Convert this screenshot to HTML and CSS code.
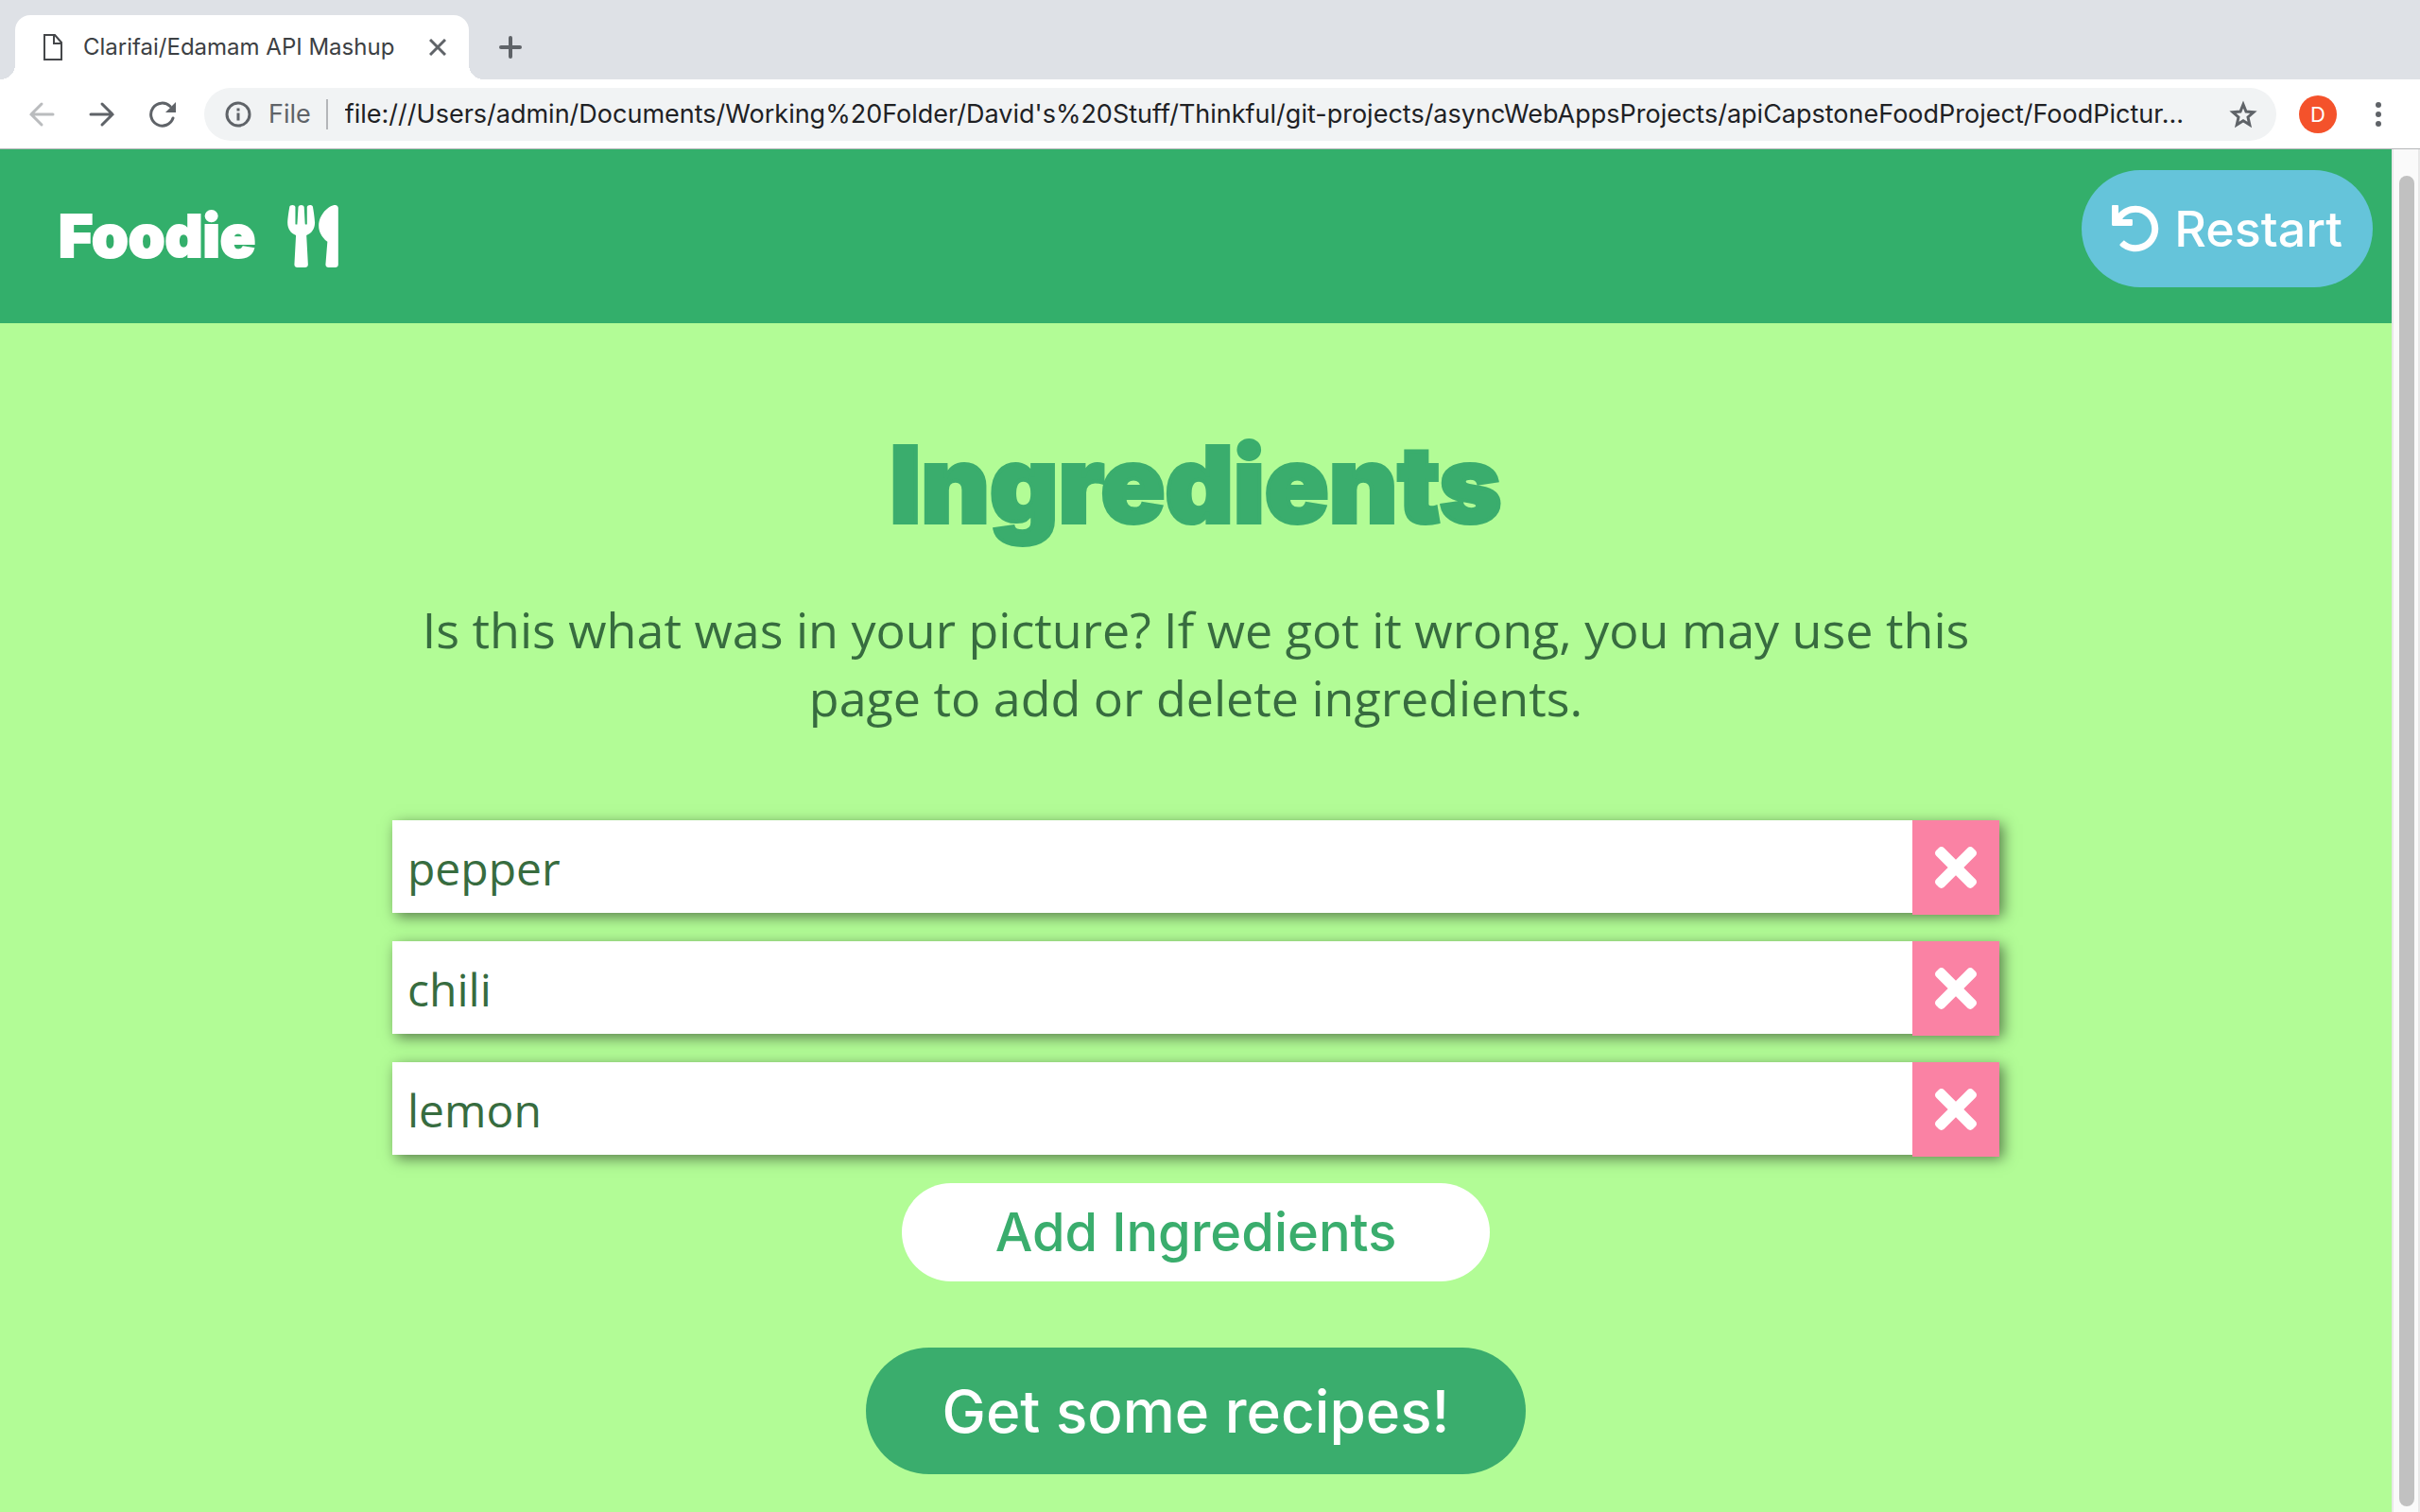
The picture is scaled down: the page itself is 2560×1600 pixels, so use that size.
FILE: index.html
```
<!DOCTYPE html>
<html lang="en">
<head>
<meta charset="utf-8">
<title>Clarifai/Edamam API Mashup</title>
<link rel="stylesheet" href="styles.css">
</head>
<body>
<div class="tab-strip">
  <div class="tab">
    <svg class="tab-file" width="20" height="28" viewBox="0 0 20 28" fill="none" stroke="#45474a" stroke-width="2"><path d="M1 1h11l7 8v18H1zM11 1v9h8"/></svg>
    <span class="tab-title">Clarifai/Edamam API Mashup</span>
    <button class="icon-button" aria-label="Close tab"><svg width="18" height="18" viewBox="0 0 18 18" stroke="#5f6368" stroke-width="3"><path d="M1 1l16 16M17 1L1 17"/></svg></button>
  </div>
  <button class="icon-button new-tab" aria-label="New tab"><svg width="24" height="24" viewBox="0 0 24 24" stroke="#5f6368" stroke-width="4" stroke-linecap="round"><path d="M12 2v20M2 12h20"/></svg></button>
</div>
<div class="toolbar">
  <div class="nav-buttons">
    <button class="icon-button" aria-label="Back"><svg width="28" height="28" viewBox="0 0 28 28" fill="none" stroke="#babcbe" stroke-width="3" stroke-linecap="round"><path d="M26 14H3M14 3L3 14l11 11"/></svg></button>
    <button class="icon-button" aria-label="Forward"><svg width="28" height="28" viewBox="0 0 28 28" fill="none" stroke="#5f6368" stroke-width="3" stroke-linecap="round"><path d="M2 14h23M14 3l11 11-11 11"/></svg></button>
    <button class="icon-button" aria-label="Reload"><svg width="28" height="28" viewBox="0 0 28 28" fill="none"><path d="M25 18A12 12 0 1 1 22 5.500" stroke="#5f6368" stroke-width="3" stroke-linecap="round"/><path d="M28 1v11h-11z" fill="#5f6368"/></svg></button>
  </div>
  <div class="omnibox">
    <svg width="28" height="28" viewBox="0 0 28 28" fill="none" stroke="#5f6368" stroke-width="3"><circle cx="14" cy="14" r="12"/><path d="M14 12.500v8M14 7.500v3"/></svg>
    <label class="scheme" for="url">File</label>
    <span class="separator"></span>
    <input class="url" id="url" type="text" value="file:///Users/admin/Documents/Working%20Folder/David's%20Stuff/Thinkful/git-projects/asyncWebAppsProjects/apiCapstoneFoodProject/FoodPictur...">
    <button class="icon-button" aria-label="Bookmark"><svg width="30" height="30" viewBox="0 0 30 30" fill="none" stroke="#5f6368" stroke-width="3"><path d="M15 4.500l3 7.500 8 .700-6 5.300 1.800 8L15 21.700 8.200 26l1.800-8-6-5.300 8-.700z"/></svg></button>
  </div>
  <button class="avatar">D</button>
  <button class="icon-button menu" aria-label="Menu"><svg width="8" height="28" viewBox="0 0 8 28" fill="#5f6368"><circle cx="4" cy="4" r="3"/><circle cx="4" cy="14" r="3"/><circle cx="4" cy="24" r="3"/></svg></button>
</div>
<div class="viewport">
  <div class="page">
    <header class="site-header">
      <div class="brand">
        <span>Foodie</span>
        <svg width="54" height="66" viewBox="0 0 416 512" fill="#fff"><path d="M207.9 15.2c.8 4.7 16.1 94.5 16.1 128.8 0 52.3-27.8 89.6-68.9 104.600L168 486.700c.7 13.700-10.200 25.300-24 25.300H80c-13.700 0-24.700-11.500-24-25.300l12.900-238.100C27.700 233.600 0 196.200 0 144 0 109.600 15.300 19.900 16.100 15.200 19.300-5.100 61.400-5.400 64 16.300v141.200c1.300 3.400 15.100 3.200 16 0 1.400-25.300 7.900-139.200 8-141.800 3.300-20.800 44.700-20.800 47.900 0 .2 2.700 6.600 116.500 8 141.800.9 3.200 14.800 3.400 16 0V16.300c2.600-21.600 44.800-21.400 48-1.100zm119.200 285.700l-15 185.100c-1.200 14 9.900 26 23.900 26h56c13.300 0 24-10.700 24-24V24c0-13.200-10.700-24-24-24-82.500 0-221.400 178.500-64.900 300.900z"/></svg>
      </div>
      <button class="restart">
        <svg width="50" height="50" viewBox="0 0 512 512" fill="#fff"><path d="M212.333 224.333H12c-6.627 0-12-5.373-12-12V12C0 5.373 5.373 0 12 0h48c6.627 0 12 5.373 12 12v78.112C117.773 39.279 184.260 7.470 258.175 8.007c136.906.994 246.448 111.623 246.157 248.532C504.041 393.258 393.120 504 256.333 504c-64.089 0-122.496-24.313-166.510-64.215-5.099-4.622-5.334-12.554-.467-17.420l33.967-33.967c4.474-4.474 11.662-4.717 16.401-.525C170.760 415.336 211.580 432 256.333 432c97.268 0 176-78.716 176-176 0-97.267-78.716-176-176-176-58.496 0-110.280 28.476-142.274 72.333h98.274c6.627 0 12 5.373 12 12v48c0 6.627-5.373 12-12 12z"/></svg>
        <span>Restart</span>
      </button>
    </header>
    <main class="content">
      <h1 class="title">Ingredients</h1>
      <p class="intro">Is this what was in your picture? If we got it wrong, you may use this page to add or delete ingredients.</p>
      <ul class="ingredients">
        <li class="ingredient"><span class="name">pepper</span><button class="remove" aria-label="Delete pepper"><svg width="44" height="44" viewBox="0 80 352 352"><use href="#times"/></svg></button></li>
        <li class="ingredient"><span class="name">chili</span><button class="remove" aria-label="Delete chili"><svg width="44" height="44" viewBox="0 80 352 352"><use href="#times"/></svg></button></li>
        <li class="ingredient"><span class="name">lemon</span><button class="remove" aria-label="Delete lemon"><svg width="44" height="44" viewBox="0 80 352 352"><use href="#times"/></svg></button></li>
      </ul>
      <button class="add">Add Ingredients</button>
      <button class="recipes">Get some recipes!</button>
    </main>
  </div>
  <div class="scrollbar"><div class="thumb"></div></div>
</div>
<svg class="symbols" width="0" height="0"><defs><path id="times" fill="#fff" d="M242.720 256l100.070-100.070c12.280-12.280 12.280-32.190 0-44.480l-22.240-22.240c-12.280-12.280-32.190-12.280-44.480 0L176 189.280 75.930 89.210c-12.280-12.280-32.190-12.280-44.480 0L9.210 111.450c-12.280 12.280-12.280 32.190 0 44.480L109.280 256 9.210 356.070c-12.280 12.280-12.280 32.190 0 44.480l22.240 22.240c12.280 12.280 32.200 12.280 44.480 0L176 322.720l100.070 100.070c12.280 12.280 32.200 12.280 44.480 0l22.240-22.240c12.280-12.280 12.280-32.190 0-44.480L242.720 256z"/></defs></svg>
</body>
</html>
```
FILE: styles.css
```
* { box-sizing: border-box; }
body {
  margin: 0;
  min-height: 100vh;
  display: flex;
  flex-direction: column;
  font-family: Inter, "Liberation Sans", sans-serif;
}
button { border: 0; padding: 0; font-family: inherit; cursor: pointer; }
svg { display: block; flex: none; }
.symbols { position: absolute; }
.icon-button { background: none; flex: none; }

/* Browser chrome */
.tab-strip {
  height: 84px;
  padding: 16px 16px 0;
  display: flex;
  background: #dee1e6;
}
.tab {
  position: relative;
  width: 480px;
  padding: 0 24px 0 30px;
  display: flex;
  align-items: center;
  background: #fff;
  border-radius: 16px 16px 0 0;
}
.tab::before,
.tab::after {
  content: "";
  position: absolute;
  bottom: 0;
  width: 16px;
  height: 16px;
}
.tab::before { right: 100%; background: radial-gradient(circle at 0 0, #dee1e6 16px, #fff 16px); }
.tab::after { left: 100%; background: radial-gradient(circle at 100% 0, #dee1e6 16px, #fff 16px); }
.tab-title {
  flex: 1;
  margin-left: 22px;
  font-size: 24px;
  line-height: 28px;
  color: #3c4043;
  white-space: nowrap;
}
.new-tab { margin-left: 32px; }
.toolbar {
  height: 74px;
  padding: 8px 40px 8px 30px;
  display: flex;
  align-items: center;
  background: #fff;
  border-bottom: 1px solid #b4b6b8;
}
.nav-buttons { display: flex; gap: 36px; }
.omnibox {
  flex: 1;
  height: 56px;
  margin-left: 30px;
  padding: 0 20px 0 22px;
  display: flex;
  align-items: center;
  background: #f1f3f4;
  border-radius: 28px;
  font-size: 27px;
}
.scheme { margin-left: 18px; color: #5f6368; }
.separator { width: 2px; height: 32px; margin: 0 18px 0 16px; background: #b4b6b9; }
.url {
  flex: 1;
  min-width: 0;
  padding: 0;
  border: 0;
  background: none;
  font: inherit;
  color: #202124;
}
.avatar {
  width: 40px;
  height: 40px;
  margin: 0 40px 0 24px;
  border-radius: 50%;
  background: #f4522b;
  color: #fff;
  font-size: 22px;
}

/* Page */
.viewport { flex: 1; display: flex; }
.page { flex: 1; background: #b2fc96; }
.scrollbar {
  width: 30px;
  padding: 28px 4px 6px 6px;
  display: flex;
  background: #fafafa;
  border: solid #e8e8e8;
  border-width: 0 2px;
}
.thumb { width: 16px; border-radius: 8px; background: #c1c1c1; }
.site-header {
  height: 184px;
  padding: 22px 20px 0 62px;
  display: flex;
  justify-content: space-between;
  align-items: flex-start;
  background: #33af6b;
}
.brand {
  margin-top: 36px;
  display: flex;
  align-items: center;
  gap: 34px;
  color: #fff;
  font-weight: 900;
  font-size: 62px;
  line-height: 68px;
  -webkit-text-stroke: 2px #fff;
}
.restart {
  height: 124px;
  padding: 0 32px;
  display: flex;
  align-items: center;
  gap: 16px;
  border-radius: 62px;
  background: #65c4da;
  color: #fff;
  font-size: 52px;
  font-weight: 500;
}
.content {
  padding: 94px 40px 40px;
  display: flex;
  flex-direction: column;
  align-items: center;
}
.title {
  margin: 0;
  color: #3aad6d;
  font-size: 112px;
  font-weight: 900;
  line-height: 152px;
  -webkit-text-stroke: 4px #3aad6d;
}
.intro {
  max-width: 1700px;
  margin: 42px 0 94px;
  color: #376c3f;
  font-family: "Open Sans", sans-serif;
  font-size: 52px;
  line-height: 72px;
  text-align: center;
}
.ingredients {
  width: 100%;
  max-width: 1700px;
  margin: 0 0 30px;
  padding: 0;
  display: grid;
  gap: 30px;
  list-style: none;
}
.ingredient {
  height: 98px;
  display: flex;
  align-items: flex-start;
  background: #fff;
  box-shadow: 4px 4px 14px rgba(0, 0, 0, .5);
}
.name {
  flex: 1;
  padding: 0 16px;
  color: #376c3f;
  font-family: "Open Sans", sans-serif;
  font-size: 48px;
  line-height: 102px;
}
.remove {
  width: 92px;
  height: 100px;
  display: grid;
  place-items: center;
  background: #fa82a4;
}
.add {
  width: 622px;
  height: 104px;
  border-radius: 52px;
  background: #fff;
  color: #3aad6d;
  font-size: 56px;
  font-weight: 500;
}
.recipes {
  width: 698px;
  height: 134px;
  margin-top: 70px;
  border-radius: 67px;
  background: #3aad6d;
  color: #fff;
  font-size: 62px;
  font-weight: 500;
}
```
